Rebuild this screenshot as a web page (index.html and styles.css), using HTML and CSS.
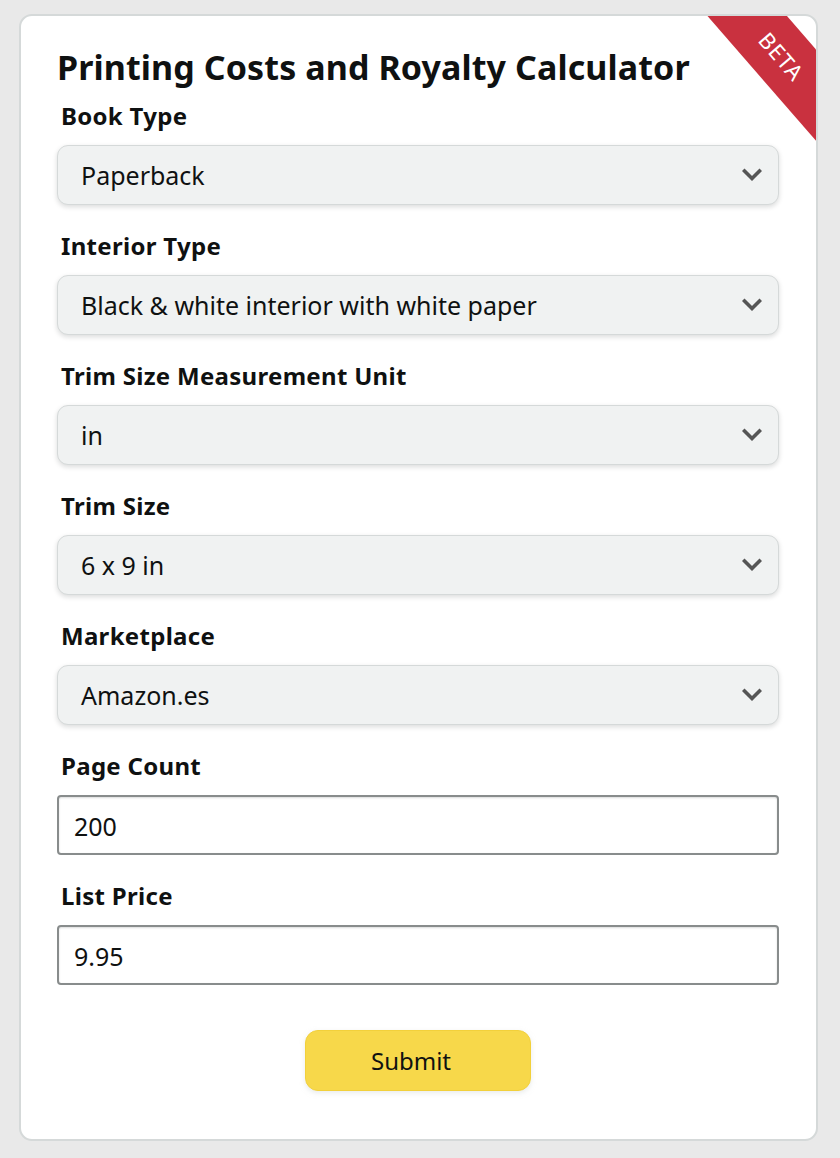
FILE: index.html
```html
<!DOCTYPE html>
<html lang="en">
<head>
<meta charset="utf-8">
<title>Printing Costs and Royalty Calculator</title>
<link rel="stylesheet" href="styles.css">
</head>
<body>
<div class="card">
  <div class="ribbon">BETA</div>
  <h1 class="title">Printing Costs and Royalty Calculator</h1>
  <form class="form">
    <div class="field">
      <label class="label">Book Type</label>
      <div class="select"><span>Paperback</span><svg class="chev" viewBox="0 0 20 14"><path d="M2.5 3 L10 10.5 L17.5 3" fill="none" stroke="#555" stroke-width="3.6" stroke-linecap="square"/></svg></div>
    </div>
    <div class="field">
      <label class="label">Interior Type</label>
      <div class="select"><span>Black &amp; white interior with white paper</span><svg class="chev" viewBox="0 0 20 14"><path d="M2.5 3 L10 10.5 L17.5 3" fill="none" stroke="#555" stroke-width="3.6" stroke-linecap="square"/></svg></div>
    </div>
    <div class="field">
      <label class="label">Trim Size Measurement Unit</label>
      <div class="select"><span>in</span><svg class="chev" viewBox="0 0 20 14"><path d="M2.5 3 L10 10.5 L17.5 3" fill="none" stroke="#555" stroke-width="3.6" stroke-linecap="square"/></svg></div>
    </div>
    <div class="field">
      <label class="label">Trim Size</label>
      <div class="select"><span>6 x 9 in</span><svg class="chev" viewBox="0 0 20 14"><path d="M2.5 3 L10 10.5 L17.5 3" fill="none" stroke="#555" stroke-width="3.6" stroke-linecap="square"/></svg></div>
    </div>
    <div class="field">
      <label class="label">Marketplace</label>
      <div class="select"><span>Amazon.es</span><svg class="chev" viewBox="0 0 20 14"><path d="M2.5 3 L10 10.5 L17.5 3" fill="none" stroke="#555" stroke-width="3.6" stroke-linecap="square"/></svg></div>
    </div>
    <div class="field">
      <label class="label">Page Count</label>
      <div class="input">200</div>
    </div>
    <div class="field">
      <label class="label">List Price</label>
      <div class="input">9.95</div>
    </div>
    <div class="actions">
      <button type="button" class="submit">Submit</button>
    </div>
  </form>
</div>
</body>
</html>
```

FILE: styles.css
```css
* { box-sizing: border-box; }
html, body { margin: 0; padding: 0; }
body {
  background: #e9e9e9;
  font-family: "Noto Sans", "Open Sans", sans-serif;
  color: #0f1111;
}
.card {
  position: relative;
  overflow: hidden;
  margin: 14px 0 0 19px;
  width: 799px;
  height: 1127px;
  background: #fff;
  border: 2px solid #d5d9d9;
  border-radius: 13px;
  padding: 29px 37px 0 36px;
}
.ribbon {
  position: absolute;
  left: 641px;
  top: 10px;
  width: 240px;
  height: 60px;
  background: #c9313f;
  color: #fff;
  font-size: 22px;
  line-height: 60px;
  text-align: center;
  letter-spacing: 1px;
  transform: rotate(49deg);
}
.title {
  margin: 0;
  font-size: 34px;
  font-weight: 700;
  line-height: 44px;
  letter-spacing: 0.1px;
}
.form { display: flex; flex-direction: column; gap: 26px; margin-top: 12px; }
.field { display: flex; flex-direction: column; gap: 14px; }
.label {
  padding-left: 4px;
  font-size: 24px;
  font-weight: 700;
  line-height: 30px;
  letter-spacing: 0.3px;
}
.select {
  display: flex;
  align-items: center;
  justify-content: space-between;
  height: 60px;
  padding: 0 16px 0 23px;
  background: #f0f2f2;
  border: 1px solid #d5d9d9;
  border-radius: 11px;
  box-shadow: 0 2px 5px rgba(15, 17, 17, 0.15);
  font-size: 25px;
}
.chev { width: 20px; height: 14px; }
.input {
  display: flex;
  align-items: center;
  height: 60px;
  padding: 2px 15px 0;
  border: 2px solid #888c8c;
  border-radius: 4px;
  box-shadow: inset 0 1px 2px rgba(15, 17, 17, 0.15);
  font-size: 25px;
}
.actions { display: flex; justify-content: center; padding-top: 19px; }
.submit {
  width: 226px;
  height: 61px;
  padding: 0 14px 0 0;
  background: #f7d84a;
  border: 1px solid #f2d03b;
  border-radius: 13px;
  box-shadow: 0 2px 5px rgba(213, 217, 217, 0.5);
  font-family: inherit;
  font-size: 24px;
  color: #0f1111;
}
```
